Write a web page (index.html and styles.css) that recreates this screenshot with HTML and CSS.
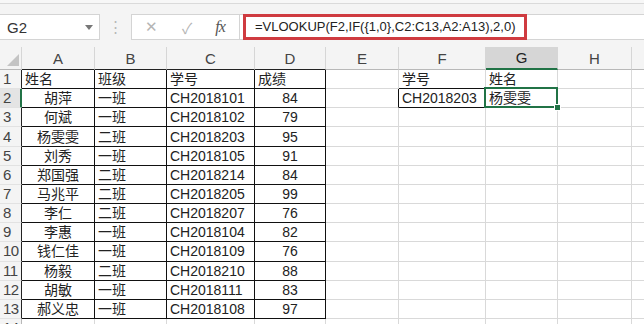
FILE: index.html
```html
<!DOCTYPE html>
<html lang="zh-CN">
<head>
	<meta charset="UTF-8">
	<title>VLOOKUP</title>
	<link rel="stylesheet" href="styles.css">
</head>
<body>
	<div class="bar">
		<div class="namebox"><span>G2</span><i class="caret"></i></div>
		<div class="grip">⋮</div>
		<div class="btns">
			<span class="x">✕</span>
			<span class="ok">✓</span>
			<span class="fx">fx</span>
		</div>
		<div class="fbox"><span class="formula">=VLOOKUP(F2,IF({1,0},C2:C13,A2:A13),2,0)</span></div>
	</div>
	<div class="sheet">
		<table>
			<colgroup>
				<col class="c-rh"><col class="c-a"><col class="c-b"><col class="c-c"><col class="c-d">
				<col class="c-e"><col class="c-f"><col class="c-g"><col class="c-h"><col class="c-i">
			</colgroup>
			<tr class="head">
				<th class="corner"><i class="tri"></i></th>
				<th class="hk">A</th><th class="hk">B</th><th class="hk">C</th><th class="hk">D</th>
				<th>E</th><th>F</th><th class="sel">G</th><th>H</th><th></th>
			</tr>
			<tr>
				<th class="rh">1</th>
				<td class="k">姓名</td><td class="k">班级</td><td class="k">学号</td><td class="k">成绩</td>
				<td></td><td class="kb">学号</td><td>姓名</td><td></td><td></td>
			</tr>
			<tr>
				<th class="rh sel">2</th>
				<td class="k mid">胡萍</td><td class="k">一班</td><td class="k">CH2018101</td><td class="k mid">84</td>
				<td class="kr"></td><td class="k">CH2018203</td><td class="cur">杨雯雯<span class="pick"><i></i></span></td><td></td><td></td>
			</tr>
			<tr>
				<th class="rh">3</th>
				<td class="k mid">何斌</td><td class="k">一班</td><td class="k">CH2018102</td><td class="k mid">79</td>
				<td></td><td></td><td></td><td></td><td></td>
			</tr>
			<tr>
				<th class="rh">4</th>
				<td class="k mid">杨雯雯</td><td class="k">二班</td><td class="k">CH2018203</td><td class="k mid">95</td>
				<td></td><td></td><td></td><td></td><td></td>
			</tr>
			<tr>
				<th class="rh">5</th>
				<td class="k mid">刘秀</td><td class="k">一班</td><td class="k">CH2018105</td><td class="k mid">91</td>
				<td></td><td></td><td></td><td></td><td></td>
			</tr>
			<tr>
				<th class="rh">6</th>
				<td class="k mid">郑国强</td><td class="k">二班</td><td class="k">CH2018214</td><td class="k mid">84</td>
				<td></td><td></td><td></td><td></td><td></td>
			</tr>
			<tr>
				<th class="rh">7</th>
				<td class="k mid">马兆平</td><td class="k">二班</td><td class="k">CH2018205</td><td class="k mid">99</td>
				<td></td><td></td><td></td><td></td><td></td>
			</tr>
			<tr>
				<th class="rh">8</th>
				<td class="k mid">李仁</td><td class="k">二班</td><td class="k">CH2018207</td><td class="k mid">76</td>
				<td></td><td></td><td></td><td></td><td></td>
			</tr>
			<tr>
				<th class="rh">9</th>
				<td class="k mid">李惠</td><td class="k">一班</td><td class="k">CH2018104</td><td class="k mid">82</td>
				<td></td><td></td><td></td><td></td><td></td>
			</tr>
			<tr>
				<th class="rh">10</th>
				<td class="k mid">钱仁佳</td><td class="k">一班</td><td class="k">CH2018109</td><td class="k mid">76</td>
				<td></td><td></td><td></td><td></td><td></td>
			</tr>
			<tr>
				<th class="rh">11</th>
				<td class="k mid">杨毅</td><td class="k">二班</td><td class="k">CH2018210</td><td class="k mid">88</td>
				<td></td><td></td><td></td><td></td><td></td>
			</tr>
			<tr>
				<th class="rh">12</th>
				<td class="k mid">胡敏</td><td class="k">一班</td><td class="k">CH2018111</td><td class="k mid">83</td>
				<td></td><td></td><td></td><td></td><td></td>
			</tr>
			<tr>
				<th class="rh">13</th>
				<td class="k mid">郝义忠</td><td class="k">一班</td><td class="k">CH2018108</td><td class="k mid">97</td>
				<td></td><td></td><td></td><td></td><td></td>
			</tr>
			<tr>
				<th class="rh plain">14</th>
				<td></td><td></td><td></td><td></td><td></td><td></td><td></td><td></td><td></td>
			</tr>
		</table>
	</div>
</body>
</html>
```

FILE: styles.css
```css
*{
	margin: 0;
	padding: 0;
	box-sizing: border-box;
}
body{
	width: 644px;
	height: 324px;
	overflow: hidden;
	background: #fff;
	color: #222;
	font-family: "Liberation Sans", "Noto Sans CJK SC", sans-serif;
}

/* formula bar */
.bar{
	height: 47px;
	display: flex;
	align-items: flex-start;
	padding-top: 14px;
	background: linear-gradient(#f7f7f7 3px, #dadada 3px, #dadada 4px, #f4f4f4 4px);
}
.namebox{
	width: 101px;
	height: 26px;
	margin-left: -1px;
	background: #fff;
	border: 1px solid #d4d4d4;
	display: flex;
	align-items: center;
	justify-content: space-between;
	padding: 0 6px 0 7px;
	font-size: 15px;
	color: #333;
}
.caret{
	width: 0;
	height: 0;
	border-left: 4px solid transparent;
	border-right: 4px solid transparent;
	border-top: 5px solid #777;
}
.grip{
	width: 31px;
	height: 26px;
	line-height: 26px;
	text-align: center;
	color: #b8b8b8;
	font-size: 15px;
}
.btns{
	width: 108px;
	height: 26px;
	background: #fff;
	border: 1px solid #d4d4d4;
	border-right: none;
	display: flex;
	align-items: center;
}
.btns .x{
	width: 36px;
	text-align: center;
	color: #b5b5b5;
	font-size: 15px;
	margin-left: 1px;
}
.btns .ok{
	width: 36px;
	text-align: center;
	color: #b5b5b5;
	font-size: 15px;
}
.btns .fx{
	width: 30px;
	text-align: center;
	font-family: "Liberation Serif", serif;
	font-style: italic;
	font-size: 16px;
	color: #555;
	letter-spacing: -1px;
}
.fbox{
	flex: 1;
	height: 26px;
	background: #fff;
	border: 1px solid #d4d4d4;
	border-right: none;
	padding-left: 3px;
}
.formula{
	display: block;
	width: 284px;
	height: 26px;
	margin-top: -1px;
	border: 3px solid #cf3b40;
	padding-left: 9px;
	line-height: 20px;
	font-size: 13px;
	color: #222;
	white-space: nowrap;
}

/* sheet */
.sheet{
	overflow: hidden;
}
.sheet table{
	border-collapse: separate;
	border-spacing: 0;
	table-layout: fixed;
	width: 680px;
}
.c-rh{width: 22px;}
.c-a{width: 73px;}
.c-b{width: 72px;}
.c-c{width: 88px;}
.c-d{width: 71px;}
.c-e{width: 73px;}
.c-f{width: 87px;}
.c-g{width: 72px;}
.c-h{width: 74px;}
.c-i{width: 48px;}

.sheet th{
	font-weight: normal;
	font-size: 15px;
	color: #444;
	background: #f4f4f4;
}
.head th{
	height: 22px;
	border-right: 1px solid #d6d6d6;
	border-bottom: 1px solid #b8b8b8;
	text-align: center;
	line-height: 21px;
}
.head th.hk{border-bottom-color: #222;}
.head th.sel{
	background: #d6d6d6;
	border-bottom: 2px solid #217346;
	color: #222;
}
.corner{
	position: relative;
}
.tri{
	position: absolute;
	right: 2px;
	bottom: 3px;
	width: 0;
	height: 0;
	border-left: 12px solid transparent;
	border-bottom: 12px solid #c4c4c4;
}
.rh{
	height: 19.17px;
	border-right: 1px solid #222;
	border-bottom: 1px solid #e2e2e2;
	text-align: left;
	padding-left: 3px;
	line-height: 18px;
	letter-spacing: -0.5px;
}
.rh.sel{
	background: #e4e4e4;
	border-right: 2px solid #217346;
}
.rh.plain{border-right-color: #b8b8b8;}

.sheet td{
	height: 19.17px;
	border-right: 1px solid #d9d9d9;
	border-bottom: 1px solid #d9d9d9;
	padding: 0 3px;
	font-size: 14px;
	line-height: 18px;
	white-space: nowrap;
	overflow: hidden;
}
.sheet td.k{
	border-right-color: #111;
	border-bottom-color: #111;
}
.sheet td.kb{border-bottom-color: #111;}
.sheet td.kr{border-right-color: #111;}
.sheet td.mid{text-align: center;}
.sheet td.cur{
	position: relative;
	overflow: visible;
}
.pick{
	position: absolute;
	left: -2px;
	top: -2px;
	right: -1px;
	bottom: -1px;
	border: 2px solid #217346;
}
.pick i{
	position: absolute;
	right: -5px;
	bottom: -5px;
	width: 7px;
	height: 7px;
	background: #217346;
	border: 1px solid #fff;
}
```
